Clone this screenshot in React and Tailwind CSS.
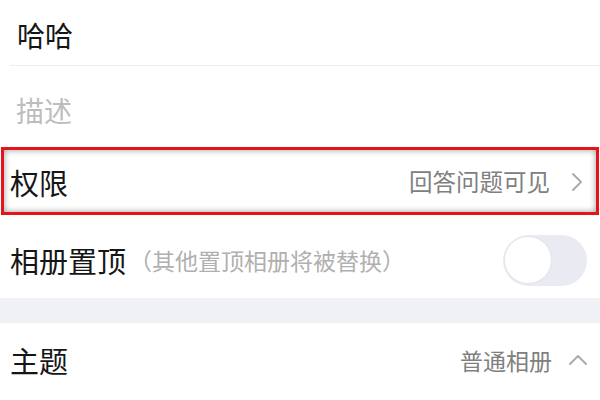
export default function App() {
  const font = { fontFamily: '"Noto Sans CJK SC", "Noto Sans", sans-serif' };
  return (
    <div className="w-[600px] h-[400px] bg-white overflow-hidden text-[#161616]" style={font}>
      <div className="h-[65px] pl-[17px] pt-[5px] flex items-center text-[28px] leading-none">哈哈</div>
      <div className="ml-[10px] h-px bg-[#ededed]"></div>
      <div className="h-[81px] pl-[16px] pt-[6px] flex items-center text-[28px] leading-none text-[#bdbdbd]">描述</div>
      <div className="h-[68px] mx-[1px] border-[3px] border-[#e3141c] shadow-[inset_0_0_6px_rgba(0,0,0,0.4)] flex items-center pl-[6px] pr-[12px]">
        <span className="text-[29px] leading-none pt-[2px]">权限</span>
        <span className="ml-auto text-[23.5px] leading-none text-[#808080] pt-[2px]">回答问题可见</span>
        <svg className="ml-[21px] mt-[2px]" width="13" height="20" viewBox="0 0 13 20" fill="none">
          <polyline points="2,2 10,10 2,18" stroke="#a8a8a8" strokeWidth="1.8" strokeLinecap="round" strokeLinejoin="round" />
        </svg>
      </div>
      <div className="h-[83px] pl-[10px] pr-[13px] pt-[7px] flex items-center">
        <span className="text-[29px] leading-none">相册置顶</span>
        <span className="ml-[3px] text-[23px] leading-none text-[#b0b0b0]">（其他置顶相册将被替换）</span>
        <div className="ml-auto w-[84px] h-[51px] rounded-full bg-[#eaebf2] flex items-center px-[1px]">
          <div className="w-[48px] h-[48px] rounded-full bg-white border border-[#e4e5ec]"></div>
        </div>
      </div>
      <div className="h-[25px] bg-[#f0f1f5]"></div>
      <div className="h-[77px] pl-[10px] pr-[12px] pb-[2px] flex items-center">
        <span className="text-[29px] leading-none">主题</span>
        <span className="ml-auto text-[23px] leading-none text-[#808080]">普通相册</span>
        <svg className="ml-[16px]" width="20" height="13" viewBox="0 0 20 13" fill="none">
          <polyline points="2,10 10,2 18,10" stroke="#a8a8a8" strokeWidth="1.8" strokeLinecap="round" strokeLinejoin="round" />
        </svg>
      </div>
    </div>
  );
}
